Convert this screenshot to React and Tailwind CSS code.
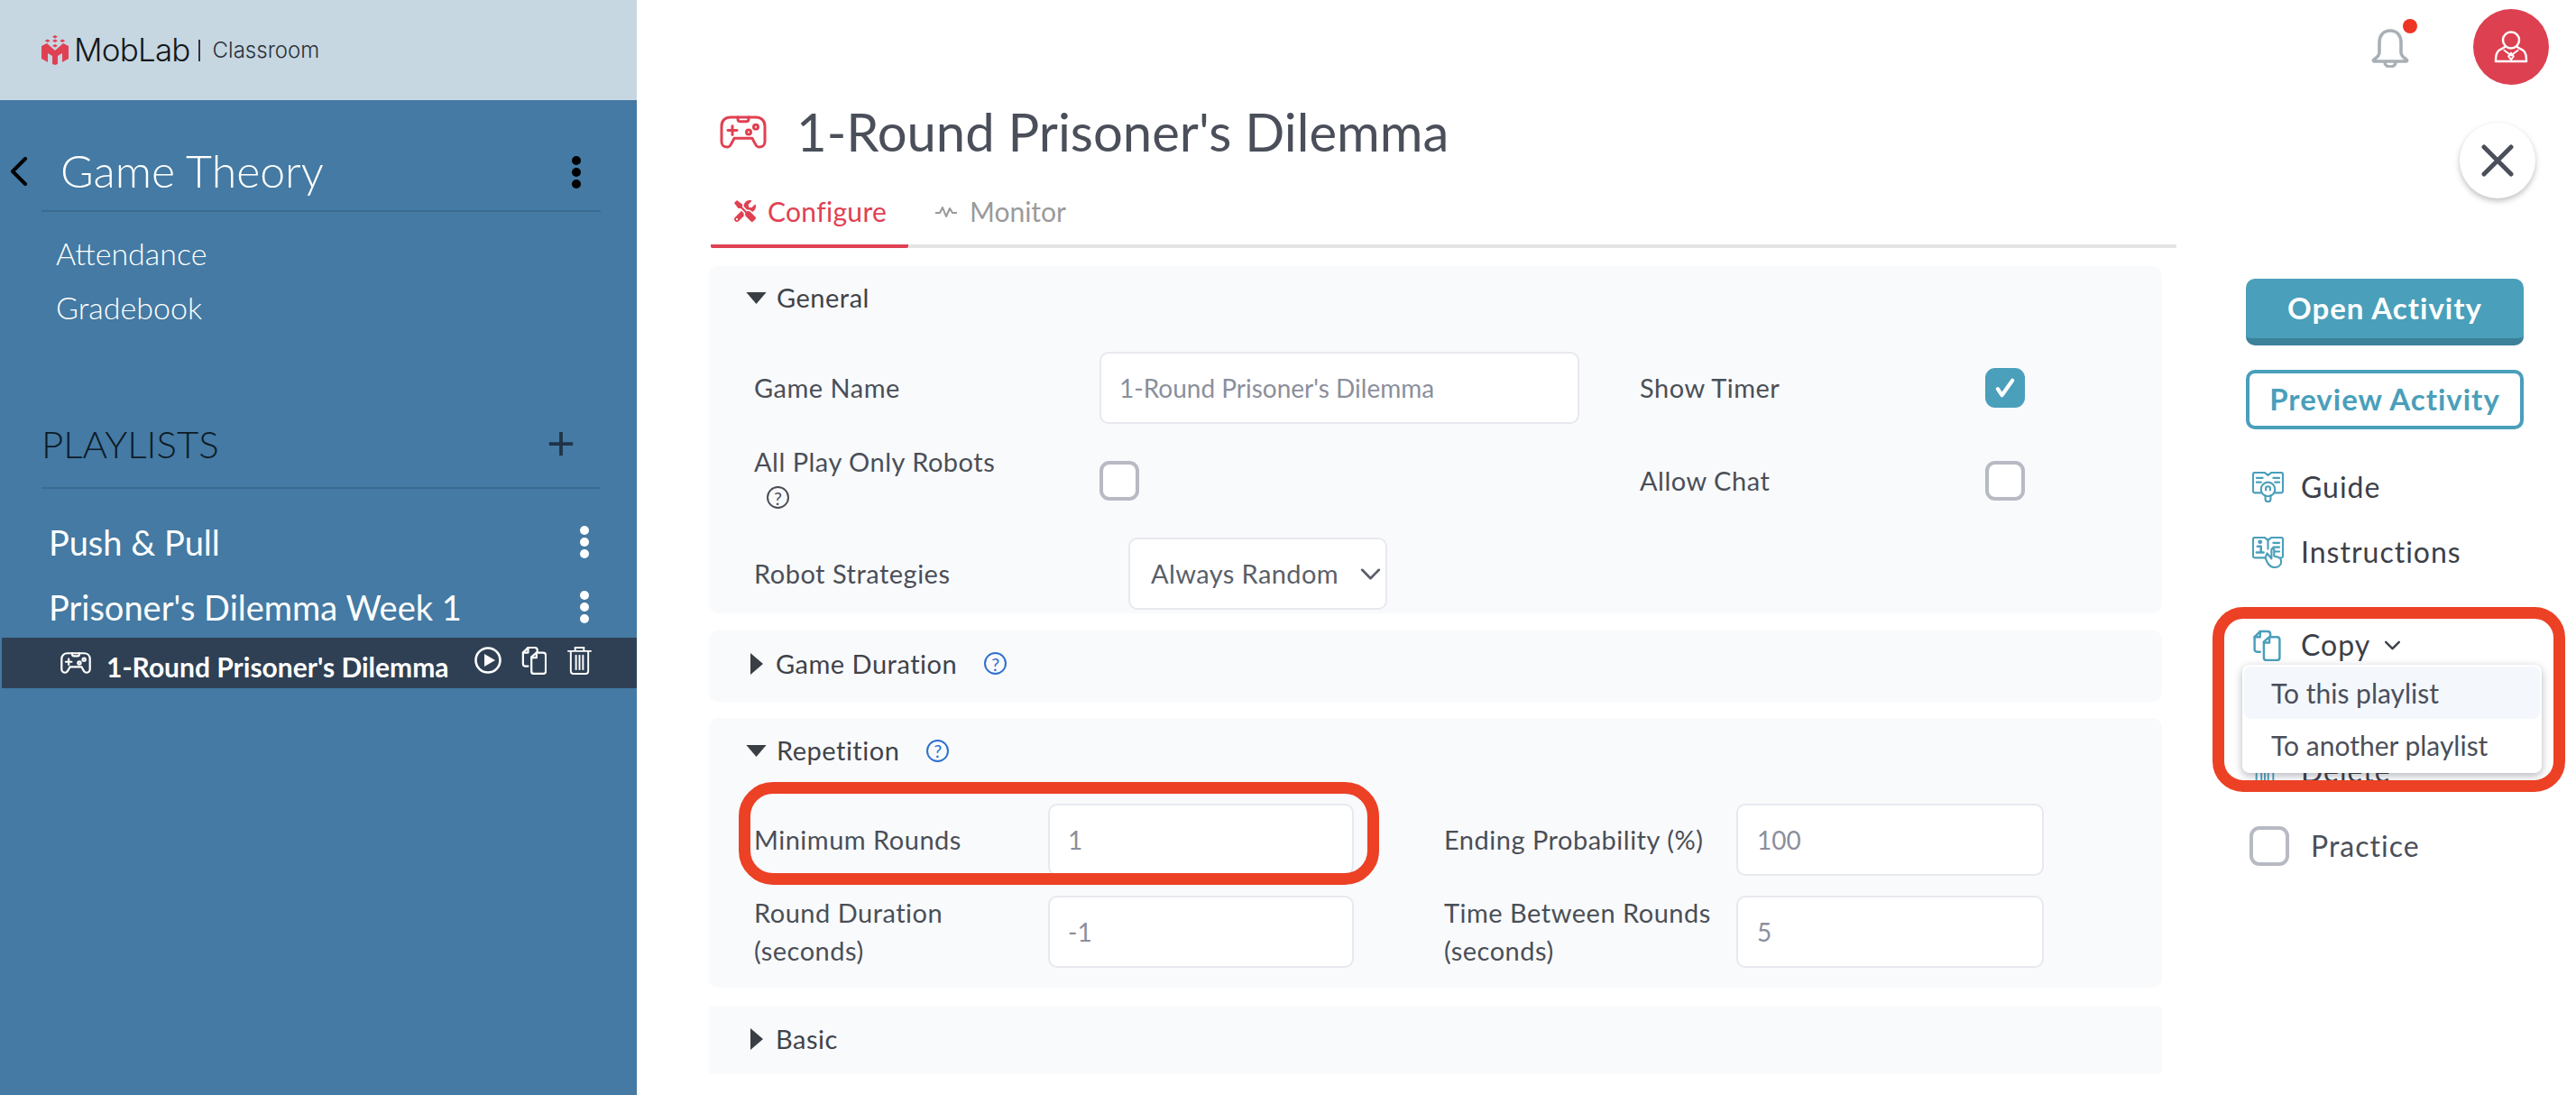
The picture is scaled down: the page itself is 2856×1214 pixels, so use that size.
import React from "react";
import { FaTools } from "react-icons/fa";

const Gamepad = ({ className, stroke = "currentColor", sw = 3 }) => (
  <svg viewBox="0 0 52 38" fill="none" stroke={stroke} strokeWidth={sw} strokeLinecap="round" strokeLinejoin="round" className={className} preserveAspectRatio="none">
    <path d="M12 2H40C46 2 50 6 50 12V30C50 34 47 36 44 36C41 36 40 34 38 30L36 26H16L14 30C12 34 11 36 8 36C5 36 2 34 2 30V12C2 6 6 2 12 2Z" />
    <path d="M20 2V4C20 6 21 7 23 7H29C31 7 32 6 32 4V2" />
    <path d="M9 17H19M14 12V22" />
    <circle cx="32" cy="19" r="2.5" />
    <circle cx="40" cy="13" r="2.5" />
  </svg>
);

const Logo = () => (
  <svg viewBox="0 0 30 33" className="w-[30px] h-[33px] shrink-0" fill="#e04152">
    <polygon points="15,0 18,1.8 15,3.6 12,1.8" />
    <polygon points="6.7,4.5 9.7,6.3 6.7,8.1 3.7,6.3" />
    <polygon points="15,4.5 18,6.3 15,8.1 12,6.3" />
    <polygon points="23.3,4.5 26.3,6.3 23.3,8.1 20.3,6.3" />
    <polygon points="15,10 18,11.8 15,13.6 12,11.8" />
    <polygon points="0,12 6,9 15,17 24,9 30,12 30,26 23,30 23,20 18,23 18,32 15,33 12,32 12,23 7,20 7,30 0,26" />
  </svg>
);

const Dots = ({ color }) => (
  <div className="flex flex-col gap-[3px]">
    <span className={`w-[10px] h-[10px] rounded-full ${color}`} />
    <span className={`w-[10px] h-[10px] rounded-full ${color}`} />
    <span className={`w-[10px] h-[10px] rounded-full ${color}`} />
  </div>
);

const CopyIcon = ({ className, stroke = "currentColor", sw = 2.4 }) => (
  <svg viewBox="0 0 30 34" fill="none" stroke={stroke} strokeWidth={sw} strokeLinejoin="round" strokeLinecap="round" className={className}>
    <path d="M8 24H5C3 24 2 23 2 21V8L8 2H16C18 2 19 3 19 5V7" />
    <path d="M2 8H8V2" />
    <path d="M12 13L18 8H26C28 8 29 9 29 11V30C29 32 28 33 26 33H15C13 33 12 32 12 30Z" />
    <path d="M12 14H18V8" />
  </svg>
);

const Help = ({ color }) => (
  <span className={`inline-flex w-[25px] h-[25px] rounded-full border-2 items-center justify-center text-[20px] leading-none ${color}`}>?</span>
);

const Down = () => <svg viewBox="0 0 24 14" className="w-[23px] h-[13px] shrink-0" fill="#3a3f46"><polygon points="0,0 24,0 12,14" /></svg>;
const Right = () => <svg viewBox="0 0 14 24" className="w-[14px] h-[24px] shrink-0" fill="#3a3f46"><polygon points="0,0 14,12 0,24" /></svg>;

const Check = ({ checked }) =>
  checked ? (
    <div className="w-[44px] h-[44px] rounded-[11px] bg-[#4a9fba] flex items-center justify-center shrink-0">
      <svg viewBox="0 0 24 24" className="w-[28px] h-[28px]" fill="none" stroke="#fff" strokeWidth="3.6" strokeLinecap="round" strokeLinejoin="round"><path d="M5 13l4 6L19 5" /></svg>
    </div>
  ) : (
    <div className="w-[44px] h-[44px] rounded-[11px] border-[4px] border-[#b8bac3] bg-white shrink-0" />
  );

const Field = ({ children, className }) => (
  <div className={`h-[80px] rounded-[10px] border-[2px] border-[#e8e9ee] bg-white flex items-center text-[28px] text-[#8b8f9c] shrink-0 ${className}`}>{children}</div>
);

const Label = ({ children, className = "" }) => <div className={`text-[29px] tracking-[0.5px] leading-[42px] text-[#4a4f57] shrink-0 ${className}`}>{children}</div>;

const Heading = ({ children }) => <span className="text-[29px] tracking-[0.5px] text-[#3f434a]">{children}</span>;

const ActionRow = ({ icon, children, className = "" }) => (
  <div className={`h-[40px] flex items-center text-[32px] tracking-[1px] text-[#3c4048] ${className}`}>
    <div className="w-[61px] pl-[7px] shrink-0">{icon}</div>
    {children}
  </div>
);

export default function App() {
  return (
    <div className="relative flex w-[2856px] h-[1214px] overflow-hidden bg-white font-['Lato',sans-serif]">
      {/* Sidebar */}
      <aside className="w-[706px] shrink-0 h-full bg-[#447aa3] flex flex-col">
        <div className="h-[111px] bg-[#c6d7e2] flex items-center pl-[46px]">
          <Logo />
          <span className="ml-[6px] text-[35px] font-['Inter',sans-serif] font-light tracking-[-0.8px] text-[#15171a]">MobLab</span>
          <span className="ml-[9px] w-[2px] h-[24px] bg-[#30343a]" />
          <span className="ml-[14px] text-[24px] font-['Inter',sans-serif] font-light text-[#2b3138]">Classroom</span>
        </div>
        <div className="mt-[39px] pl-[11px] pr-[40px] flex">
          <div className="w-[35px] shrink-0 flex items-center pb-[6px]">
            <svg viewBox="0 0 20 32" className="w-[20px] h-[32px]" fill="none" stroke="#000" strokeWidth="4" strokeLinecap="round" strokeLinejoin="round"><path d="M17 2L3 16l14 14" /></svg>
          </div>
          <div className="flex-1 h-[85px] border-b-2 border-[#3b6b91] flex items-center justify-between pl-[21px] pr-[22px] pb-[5px]">
            <span className="text-[50px] font-light text-white leading-none">Game Theory</span>
            <div className="mt-[4px]"><Dots color="bg-black" /></div>
          </div>
        </div>
        <div className="mt-[15px] pl-[62px] text-[34px] font-light text-white">
          <div className="h-[60px] flex items-center">Attendance</div>
          <div className="h-[60px] flex items-center">Gradebook</div>
        </div>
        <div className="mt-[82px] ml-[46px] mr-[40px] h-[90px] border-b-2 border-[#3b6b91] flex items-center justify-between pb-[8px] pr-[29px]">
          <span className="text-[42px] font-light text-[#0e1a26]">PLAYLISTS</span>
          <svg viewBox="0 0 32 32" className="w-[30px] h-[30px]" fill="none" stroke="#1f3347" strokeWidth="4"><path d="M16 2V30M2 16H30" /></svg>
        </div>
        <div className="mt-[22px] text-[38px] text-white">
          <div className="h-[72px] flex items-center justify-between pl-[54px] pr-[53px] pt-[2px]"><span>Push &amp; Pull</span><Dots color="bg-white" /></div>
          <div className="h-[72px] flex items-center justify-between pl-[54px] pr-[53px] pt-[2px]"><span>Prisoner's Dilemma Week 1</span><Dots color="bg-white" /></div>
        </div>
        <div className="-mt-[1px] ml-[2px] h-[56px] bg-[#2f4054] flex items-center pl-[65px] pr-[49px] text-white">
          <Gamepad className="w-[34px] h-[24px] shrink-0" sw={3.4} />
          <span className="ml-[17px] text-[30px] font-bold leading-none pt-[7px]">1-Round Prisoner's Dilemma</span>
          <div className="ml-auto flex items-center gap-[22px] pb-[6px]">
            <svg viewBox="0 0 30 30" className="w-[30px] h-[30px]" fill="none" stroke="#fff" strokeWidth="2.6"><circle cx="15" cy="15" r="13.5" /><polygon points="11,8 23,15 11,22" fill="#fff" stroke="none" /></svg>
            <CopyIcon className="w-[28px] h-[32px]" />
            <svg viewBox="0 0 30 33" className="w-[29px] h-[32px]" fill="none" stroke="#fff" strokeWidth="2" strokeLinecap="round"><path d="M2 6H28M10 6V2H20V6M5 6V29C5 31 6 32 8 32H22C24 32 25 31 25 29V6M11 11V27M15 11V27M19 11V27" /></svg>
          </div>
        </div>
      </aside>

      {/* Center column */}
      <section className="w-[1707px] shrink-0 pl-[80px]">
        <div className="mt-[116px] h-[60px] flex items-center pl-[12px]">
          <Gamepad className="w-[52px] h-[37px] text-[#e04152] shrink-0" />
          <h1 className="ml-[33px] text-[58px] leading-none text-[#4a4f5a]">1-Round Prisoner's Dilemma</h1>
        </div>
        <div className="mt-[24px] ml-[2px] h-[75px] border-b-4 border-[#e4e4e4] flex">
          <div className="w-[219px] h-[75px] border-b-4 border-[#e04152] rounded-b-[2px] flex items-center pl-[25px] pb-[3px] gap-[12px] text-[30px] tracking-[0.3px] text-[#e04152]">
            <FaTools className="w-[26px] h-[24px]" />
            <span>Configure</span>
          </div>
          <div className="h-[75px] pb-[6px] flex items-center pl-[30px] gap-[14px] text-[30px] text-[#9a9a9a]">
            <svg viewBox="0 0 24 14" className="w-[24px] h-[14px]" fill="none" stroke="#9a9a9a" strokeWidth="2" strokeLinejoin="round"><path d="M0 8H5L8 2L12 12L16 3L19 8H24" /></svg>
            <span>Monitor</span>
          </div>
        </div>

        <div className="mt-[20px] w-[1611px] flex flex-col gap-[19px]">
          {/* General */}
          <div className="h-[385px] rounded-[10px] bg-[#f9fafc]">
            <div className="h-[70px] flex items-center pl-[41px] gap-[11px]"><Down /><Heading>General</Heading></div>
            <div className="mt-[25px] h-[80px] flex items-center pl-[50px]">
              <Label className="w-[383px]">Game Name</Label>
              <Field className="w-[532px] pl-[20px]">1-Round Prisoner's Dilemma</Field>
              <Label className="ml-[67px] w-[383px]">Show Timer</Label>
              <Check checked />
            </div>
            <div className="h-[126px] flex items-center pl-[50px]">
              <div className="w-[383px] shrink-0 flex flex-col">
                <Label className="-mt-[4px]">All Play Only Robots</Label>
                <div className="pl-[14px] pt-[6px] h-[38px] text-[#4a4f57]"><Help color="border-[#4a4f57]" /></div>
              </div>
              <Check />
              <div className="w-[488px] shrink-0" />
              <Label className="ml-[67px] w-[383px]">Allow Chat</Label>
              <Check />
            </div>
            <div className="h-[80px] flex items-center pl-[50px]">
              <Label className="w-[415px]">Robot Strategies</Label>
              <Field className="w-[287px] pl-[23px] justify-between pr-[5px]">
                <span className="text-[29px] tracking-[0.4px] text-[#5a5f6a]">Always Random</span>
                <svg viewBox="0 0 24 14" className="w-[23px] h-[13px]" fill="none" stroke="#5a5f6a" strokeWidth="3" strokeLinecap="round" strokeLinejoin="round"><path d="M2 2L12 12L22 2" /></svg>
              </Field>
            </div>
          </div>

          {/* Game Duration */}
          <div className="h-[79px] rounded-[10px] bg-[#f9fafc] flex items-center pl-[46px] pb-[6px]">
            <Right />
            <span className="ml-[14px]"><Heading>Game Duration</Heading></span>
            <span className="ml-[30px] text-[#2f6fd0] flex"><Help color="border-[#2f6fd0]" /></span>
          </div>

          {/* Repetition */}
          <div className="h-[299px] -mt-[1px] rounded-[10px] bg-[#f9fafc]">
            <div className="h-[72px] flex items-center pl-[41px] gap-[11px]">
              <Down /><Heading>Repetition</Heading>
              <span className="ml-[19px] text-[#2f6fd0] flex"><Help color="border-[#2f6fd0]" /></span>
            </div>
            <div className="mt-[23px] h-[80px] flex items-center pl-[50px]">
              <Label className="w-[326px]">Minimum Rounds</Label>
              <Field className="w-[339px] pl-[20px]">1</Field>
              <Label className="ml-[100px] w-[324px]">Ending Probability (%)</Label>
              <Field className="w-[341px] pl-[21px]">100</Field>
            </div>
            <div className="mt-[22px] h-[80px] flex items-center pl-[50px]">
              <Label className="w-[326px]">Round Duration<br />(seconds)</Label>
              <Field className="w-[339px] pl-[20px]">-1</Field>
              <Label className="ml-[100px] w-[324px]">Time Between Rounds<br />(seconds)</Label>
              <Field className="w-[341px] pl-[21px]">5</Field>
            </div>
          </div>

          {/* Basic */}
          <div className="h-[76px] mt-[1px] rounded-[4px] bg-[#f9fafc] flex items-center pl-[46px] pb-[2px]">
            <Right />
            <span className="ml-[14px]"><Heading>Basic</Heading></span>
          </div>
        </div>
      </section>

      {/* Right column */}
      <section className="flex-1 min-w-0 flex flex-col">
        <div className="h-[96px] flex justify-end pr-[30px] pt-[10px] gap-[71px]">
          <div className="relative w-[42px] h-[44px] mt-[21px]">
            <svg viewBox="0 0 42 44" className="w-[42px] h-[44px]" fill="none" stroke="#a9b0b5" strokeWidth="3.6" strokeLinejoin="round" strokeLinecap="round">
              <path d="M21 3C13 3 9 9 9 16V27C9 31 6 33 3 35C2 36 2 37 4 37H38C40 37 40 36 39 35C36 33 33 31 33 27V16C33 9 29 3 21 3Z" />
              <path d="M15 38C15 41 18 43 21 43C24 43 27 41 27 38" />
            </svg>
            <span className="absolute -top-[10px] left-[35px] w-[16px] h-[16px] rounded-full bg-[#ee3524]" />
          </div>
          <div className="w-[84px] h-[84px] rounded-full bg-[#dd4050] flex items-center justify-center">
            <svg viewBox="0 0 40 38" className="w-[40px] h-[36px]" fill="none" stroke="#fff" strokeWidth="2.6" strokeLinejoin="round" strokeLinecap="round">
              <circle cx="20" cy="11" r="9.5" />
              <path d="M13 19L6 23C3 25 2 29 2 36H38C38 29 37 25 34 23L27 19" />
              <path d="M12 23L20 29L28 23M20 26L17 30L20 34L23 30Z" strokeWidth="2" />
            </svg>
          </div>
        </div>
        <div className="mt-[40px] flex justify-end pr-[45px]">
          <div className="w-[84px] h-[84px] rounded-full bg-white shadow-[0_3px_6px_rgba(0,0,0,0.25)] flex items-center justify-center">
            <svg viewBox="0 0 36 36" className="w-[36px] h-[36px]" fill="none" stroke="#4a4f5a" strokeWidth="5" strokeLinecap="round"><path d="M3 3L33 33M33 3L3 33" /></svg>
          </div>
        </div>
        <div className="mt-[89px] ml-[77px] w-[308px] flex flex-col">
          <div className="h-[74px] rounded-[10px] bg-[#4a9fba] border-b-[8px] border-[#3c8199] flex items-center justify-center text-[33px] font-bold text-white tracking-[1px]">Open Activity</div>
          <div className="mt-[27px] h-[66px] rounded-[10px] border-[4px] border-[#4a9fba] flex items-center justify-center text-[33px] font-bold text-[#4a9fba] tracking-[1px]">Preview Activity</div>
        </div>
        <div className="ml-[77px] flex flex-col">
          <ActionRow className="mt-[44px]" icon={
            <svg viewBox="0 0 36 36" className="w-[35px] h-[35px]" fill="none" stroke="#4a9fba" strokeWidth="2.2" strokeLinejoin="round" strokeLinecap="round">
              <path d="M10 24H3C2 24 1 23 1 22V3C1 2 2 1 3 1H14L18 4L22 1H33C34 1 35 2 35 3V22C35 23 34 24 33 24H26" />
              <path d="M5 7H12M5 12H10M24 7H31M26 12H31" />
              <circle cx="18" cy="20" r="8" />
              <path d="M15 27V31C15 33 16 34 18 34C20 34 21 33 21 31V27M15.5 21V19C15.5 16 20.5 16 20.5 19V21" />
            </svg>
          }>Guide</ActionRow>
          <ActionRow className="mt-[32px]" icon={
            <svg viewBox="0 0 36 36" className="w-[35px] h-[35px]" fill="none" stroke="#4a9fba" strokeWidth="2.2" strokeLinejoin="round" strokeLinecap="round">
              <path d="M14 24H3C2 24 1 23 1 22V3C1 2 2 1 3 1H14L18 4L22 1H33C34 1 35 2 35 3V22C35 23 34 24 33 24" />
              <path d="M18 4V14M24 7H31M24 12H31M24 17H31" />
              <circle cx="9" cy="6" r="1.4" fill="#4a9fba" />
              <path d="M6 11H10V18M5 18H13" strokeWidth="2.6" />
              <path d="M17 19L22 25V15C22 13 25 13 25 15V22L31 24C33 25 33 27 33 29C33 33 29 35 25 35C21 35 18 33 15 24Z" fill="#fff" />
            </svg>
          }>Instructions</ActionRow>
          <div className="relative mt-[63px]">
            <ActionRow icon={<CopyIcon className="w-[32px] h-[35px]" stroke="#4a9fba" />}>
              Copy
              <svg viewBox="0 0 20 12" className="ml-[15px] w-[19px] h-[11px]" fill="none" stroke="#3c4048" strokeWidth="2.6" strokeLinecap="round" strokeLinejoin="round"><path d="M2 2L10 10L18 2" /></svg>
            </ActionRow>
            <div className="absolute z-10 -left-[4px] top-[42px] w-[332px] h-[120px] rounded-[8px] bg-white shadow-[0_3px_10px_rgba(40,50,70,0.35)] p-[2px] text-[30px] text-[#4a4f5a]">
              <div className="h-[58px] rounded-[8px] bg-[#f4f7fc] flex items-center pl-[30px]">To this playlist</div>
              <div className="h-[58px] flex items-center pl-[30px]">To another playlist</div>
            </div>
          </div>
          <ActionRow className="mt-[100px]" icon={
            <svg viewBox="0 0 30 33" className="w-[28px] h-[32px]" fill="none" stroke="#4a9fba" strokeWidth="2" strokeLinecap="round"><path d="M2 6H28M10 6V2H20V6M5 6V29C5 31 6 32 8 32H22C24 32 25 31 25 29V6M11 11V27M15 11V27M19 11V27" /></svg>
          }>Delete</ActionRow>
          <div className="mt-[39px] ml-[4px] flex items-center gap-[24px] text-[32px] text-[#4a4f5a] tracking-[1px]">
            <Check />
            <span>Practice</span>
          </div>
        </div>
      </section>

      {/* Annotation rings */}
      <div className="absolute left-[819px] top-[867px] w-[710px] h-[114px] border-[13px] border-[#ec4125] rounded-[38px] pointer-events-none z-20" />
      <div className="absolute left-[2453px] top-[673px] w-[391px] h-[205px] border-[13px] border-[#ec4125] rounded-[34px] pointer-events-none z-20" />
    </div>
  );
}
